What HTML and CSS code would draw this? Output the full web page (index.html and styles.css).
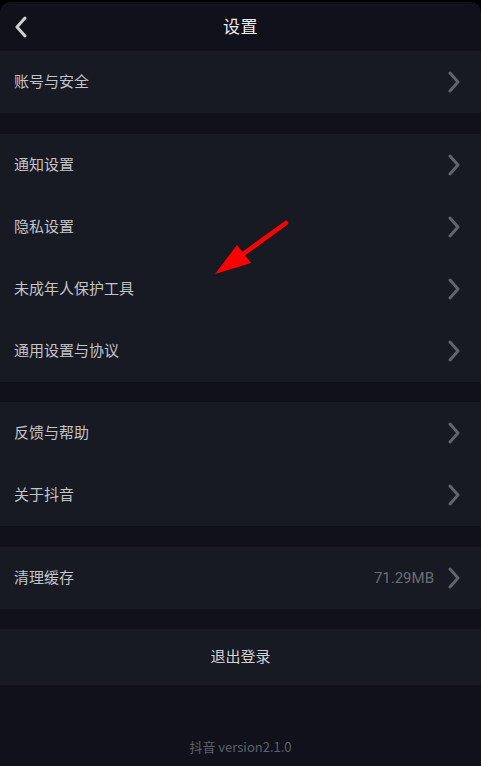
FILE: index.html
```html
<!DOCTYPE html>
<html lang="zh-CN">
<head>
<meta charset="utf-8">
<title>设置</title>
<link rel="stylesheet" href="styles.css">
</head>
<body>
<div class="screen">
  <header class="header">
    <svg class="back" width="14" height="22" viewBox="0 0 14 22"><polyline points="11,2 3,11 11,20" fill="none" stroke="#cfcfd2" stroke-width="3" stroke-linecap="round" stroke-linejoin="round"/></svg>
    <h1 class="title">设置</h1>
  </header>

  <section class="group">
    <div class="row"><span class="label">账号与安全</span><svg class="chev" width="14" height="22" viewBox="0 0 14 22"><polyline points="3,2 11,11 3,20" fill="none" stroke="#62646c" stroke-width="3" stroke-linecap="round" stroke-linejoin="round"/></svg></div>
  </section>

  <section class="group">
    <div class="row"><span class="label">通知设置</span><svg class="chev" width="14" height="22" viewBox="0 0 14 22"><polyline points="3,2 11,11 3,20" fill="none" stroke="#62646c" stroke-width="3" stroke-linecap="round" stroke-linejoin="round"/></svg></div>
    <div class="row"><span class="label">隐私设置</span><svg class="chev" width="14" height="22" viewBox="0 0 14 22"><polyline points="3,2 11,11 3,20" fill="none" stroke="#62646c" stroke-width="3" stroke-linecap="round" stroke-linejoin="round"/></svg></div>
    <div class="row"><span class="label">未成年人保护工具</span><svg class="chev" width="14" height="22" viewBox="0 0 14 22"><polyline points="3,2 11,11 3,20" fill="none" stroke="#62646c" stroke-width="3" stroke-linecap="round" stroke-linejoin="round"/></svg></div>
    <div class="row"><span class="label">通用设置与协议</span><svg class="chev" width="14" height="22" viewBox="0 0 14 22"><polyline points="3,2 11,11 3,20" fill="none" stroke="#62646c" stroke-width="3" stroke-linecap="round" stroke-linejoin="round"/></svg></div>
  </section>

  <section class="group">
    <div class="row"><span class="label">反馈与帮助</span><svg class="chev" width="14" height="22" viewBox="0 0 14 22"><polyline points="3,2 11,11 3,20" fill="none" stroke="#62646c" stroke-width="3" stroke-linecap="round" stroke-linejoin="round"/></svg></div>
    <div class="row"><span class="label">关于抖音</span><svg class="chev" width="14" height="22" viewBox="0 0 14 22"><polyline points="3,2 11,11 3,20" fill="none" stroke="#62646c" stroke-width="3" stroke-linecap="round" stroke-linejoin="round"/></svg></div>
  </section>

  <section class="group">
    <div class="row"><span class="label">清理缓存</span><span class="value">71.29MB</span><svg class="chev" width="14" height="22" viewBox="0 0 14 22"><polyline points="3,2 11,11 3,20" fill="none" stroke="#62646c" stroke-width="3" stroke-linecap="round" stroke-linejoin="round"/></svg></div>
  </section>

  <section class="group logout">
    <span class="logout-text">退出登录</span>
  </section>

  <footer class="footer">抖音 version2.1.0</footer>

  <svg class="arrow" width="481" height="766" viewBox="0 0 481 766">
    <line x1="286" y1="223" x2="232" y2="262" stroke="#ff0000" stroke-width="4.5" stroke-linecap="round"/>
    <polygon points="215,274 237,245 251,263" fill="#ff0000"/>
  </svg>
</div>
</body>
</html>
```

FILE: styles.css
```css
html, body {
  margin: 0;
  padding: 0;
  background: #000;
}
body {
  font-family: "Noto Sans CJK SC", "Noto Sans", sans-serif;
  width: 481px;
  height: 766px;
  overflow: hidden;
}
.screen {
  position: relative;
  margin-top: 2px;
  height: 764px;
  background: #10111b;
  border-radius: 10px 10px 0 0;
  overflow: hidden;
  display: flex;
  flex-direction: column;
}
.header {
  position: relative;
  height: 49px;
  flex: none;
  display: flex;
  align-items: center;
  justify-content: center;
}
.back {
  position: absolute;
  left: 14px;
  top: 14px;
}
.title {
  margin: 0;
  font-size: 17px;
  font-weight: 400;
  line-height: 20px;
  margin-top: -2px;
  color: #ececee;
  letter-spacing: 0.5px;
}
.group {
  flex: none;
  background: #171923;
  margin-bottom: 20.5px;
}
.row {
  height: 62px;
  display: flex;
  align-items: center;
  padding: 0 20px 0 14px;
}
.label {
  flex: 1;
  font-size: 15px;
  line-height: 18px;
  margin-top: -2px;
  color: #c3c4c8;
}
.value {
  font-size: 15px;
  color: #6c6e76;
  margin-right: 13px;
  font-family: "Roboto", "Noto Sans", sans-serif;
}
.chev {
  flex: none;
}
.logout {
  height: 56px;
  display: flex;
  align-items: center;
  justify-content: center;
}
.logout-text {
  font-size: 15px;
  line-height: 18px;
  margin-top: -2px;
  color: #d2d3d6;
}
.footer {
  flex: none;
  margin-top: 32px;
  text-align: center;
  font-size: 13px;
  line-height: 18px;
  color: #5e6068;
}
.arrow {
  position: absolute;
  left: 0;
  top: -2px;
  pointer-events: none;
}
```
